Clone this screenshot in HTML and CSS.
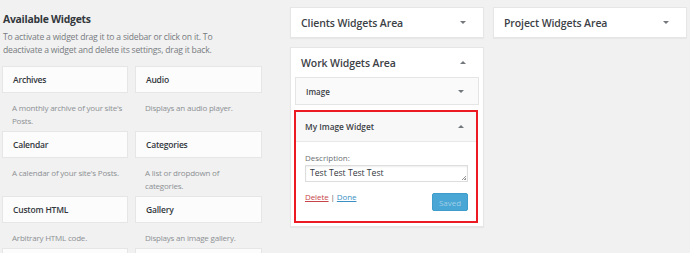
FILE: index.html
```html
<!DOCTYPE html>
<html>
<head>
<meta charset="utf-8">
<link rel="stylesheet" href="styles.css">
</head>
<body>
<div class="page">
  <div class="available">
    <h2 class="avail-title">Available Widgets</h2>
    <p class="avail-desc">To activate a widget drag it to a sidebar or click on it. To deactivate a widget and delete its settings, drag it back.</p>
    <div class="widget-grid">
      <div class="widget"><div class="widget-top">Archives</div><div class="widget-desc">A monthly archive of your site's Posts.</div></div>
      <div class="widget"><div class="widget-top">Audio</div><div class="widget-desc">Displays an audio player.</div></div>
      <div class="widget"><div class="widget-top">Calendar</div><div class="widget-desc">A calendar of your site's Posts.</div></div>
      <div class="widget"><div class="widget-top">Categories</div><div class="widget-desc">A list or dropdown of<br>categories.</div></div>
      <div class="widget"><div class="widget-top">Custom HTML</div><div class="widget-desc">Arbitrary HTML code.</div></div>
      <div class="widget"><div class="widget-top">Gallery</div><div class="widget-desc">Displays an image gallery.</div></div>
      <div class="widget"><div class="widget-top widget-next"></div></div>
      <div class="widget"><div class="widget-top widget-next"></div></div>
    </div>
  </div>

  <div class="sidebars">
    <div class="sidebar">
      <div class="sidebar-head"><span>Clients Widgets Area</span><i class="arrow down"></i></div>
    </div>
    <div class="sidebar sidebar-open">
      <div class="sidebar-head"><span>Work Widgets Area</span><i class="arrow up"></i></div>
      <div class="in-widget"><span>Image</span><i class="arrow down"></i></div>
      <div class="in-widget-open">
        <div class="open-head"><span>My Image Widget</span><i class="arrow up"></i></div>
        <div class="open-body">
          <label class="field-label">Description:</label>
          <div class="field-input">Test Test Test Test<i class="grip"></i></div>
          <div class="controls">
            <div class="links"><a class="del">Delete</a> | <a class="done">Done</a></div>
            <button class="saved">Saved</button>
          </div>
        </div>
      </div>
    </div>
  </div>

  <div class="sidebars">
    <div class="sidebar">
      <div class="sidebar-head"><span>Project Widgets Area</span><i class="arrow down"></i></div>
    </div>
  </div>
</div>
</body>
</html>
```

FILE: styles.css
```css
html, body {
  margin: 0;
  padding: 0;
  background: #f1f1f1;
  font-family: "Open Sans", "Noto Sans", sans-serif;
  color: #23282d;
}
.page {
  display: flex;
  align-items: flex-start;
  padding: 0 3px 0 2px;
}
.available {
  width: 260px;
  flex: none;
}
.avail-title {
  margin: 10px 0 0 1px;
  font-size: 10.4px;
  line-height: 18px;
  font-weight: 700;
  letter-spacing: -0.25px;
  color: #32373c;
}
.avail-desc {
  margin: 3px 0 0 1px;
  font-size: 8.6px;
  line-height: 13px;
  letter-spacing: -0.2px;
  color: #777b80;
  width: 214px;
}
.widget-grid {
  margin-top: 9px;
  display: grid;
  grid-template-columns: 126px 127px;
  column-gap: 7px;
}
.widget-top {
  height: 25px;
  line-height: 25px;
  background: #fcfcfc;
  border: 1px solid #e6e6e6;
  padding: 0 10px;
  font-size: 8.5px;
  font-weight: 600;
  letter-spacing: -0.2px;
  color: #32373c;
}
.widget-desc {
  padding: 8px 1px 4px 10px;
  font-size: 8px;
  line-height: 13px;
  letter-spacing: -0.2px;
  color: #8c9094;
}
.sidebars {
  width: 194px;
  flex: none;
  margin-left: 28px;
  padding-top: 7px;
}
.sidebars + .sidebars {
  margin-left: 9px;
}
.sidebar {
  background: #fff;
  border: 1px solid #e6e6e6;
  box-shadow: 0 1px 1px rgba(0,0,0,0.04);
  margin-bottom: 9px;
}
.sidebar-head {
  height: 29px;
  display: flex;
  align-items: center;
  justify-content: space-between;
  padding: 0 17px 0 10px;
  font-size: 10.5px;
  font-weight: 600;
  letter-spacing: -0.1px;
  color: #3c4146;
}
.arrow {
  width: 0;
  height: 0;
  border-left: 3px solid transparent;
  border-right: 3px solid transparent;
}
.arrow.down { border-top: 3px solid #72777c; }
.arrow.up { border-bottom: 3px solid #72777c; }
.sidebar-open {
  padding-bottom: 3px;
}
.in-widget {
  margin: 0 4px;
  height: 26px;
  display: flex;
  align-items: center;
  justify-content: space-between;
  padding: 0 14px 0 10px;
  background: #fafafa;
  border: 1px solid #e5e5e5;
  font-size: 8px;
  font-weight: 600;
  color: #3c4146;
}
.in-widget-open {
  margin: 5px 5px 0 3px;
  border: 2px solid #ec1b23;
  background: #fff;
}
.open-head {
  height: 29px;
  display: flex;
  align-items: center;
  justify-content: space-between;
  padding: 0 12px 0 9px;
  background: #f8f8f8;
  border-bottom: 1px solid #e8e8e8;
  font-size: 8.3px;
  font-weight: 600;
  color: #3c4146;
}
.open-body {
  padding: 10px 8px 10px 9px;
}
.field-label {
  display: block;
  font-size: 8px;
  line-height: 12px;
  color: #6b6f73;
}
.field-input {
  position: relative;
  margin-top: 1px;
  height: 15px;
  line-height: 15px;
  border: 1px solid #ddd;
  box-shadow: inset 0 1px 2px rgba(0,0,0,0.07);
  padding: 0 4px;
  font-size: 8.6px;
  color: #32373c;
}
.grip {
  position: absolute;
  right: 1px;
  bottom: 1px;
  width: 4px;
  height: 4px;
  background: linear-gradient(135deg, transparent 50%, #999 50%, #999 60%, transparent 60%, transparent 75%, #999 75%);
}
.controls {
  margin-top: 11px;
  display: flex;
  justify-content: space-between;
  align-items: center;
}
.links {
  font-size: 8px;
  letter-spacing: -0.1px;
  color: #555;
  margin-top: -11px;
}
.del { color: #c7454a; text-decoration: underline; }
.done { color: #3a8fc4; text-decoration: underline; }
.saved {
  width: 36px;
  height: 18px;
  padding: 0;
  border: 1px solid #3e9dcb;
  border-radius: 2px;
  background: #4aa6d4;
  color: #9fd0e9;
  font-family: "Open Sans", sans-serif;
  font-size: 8px;
}
```
